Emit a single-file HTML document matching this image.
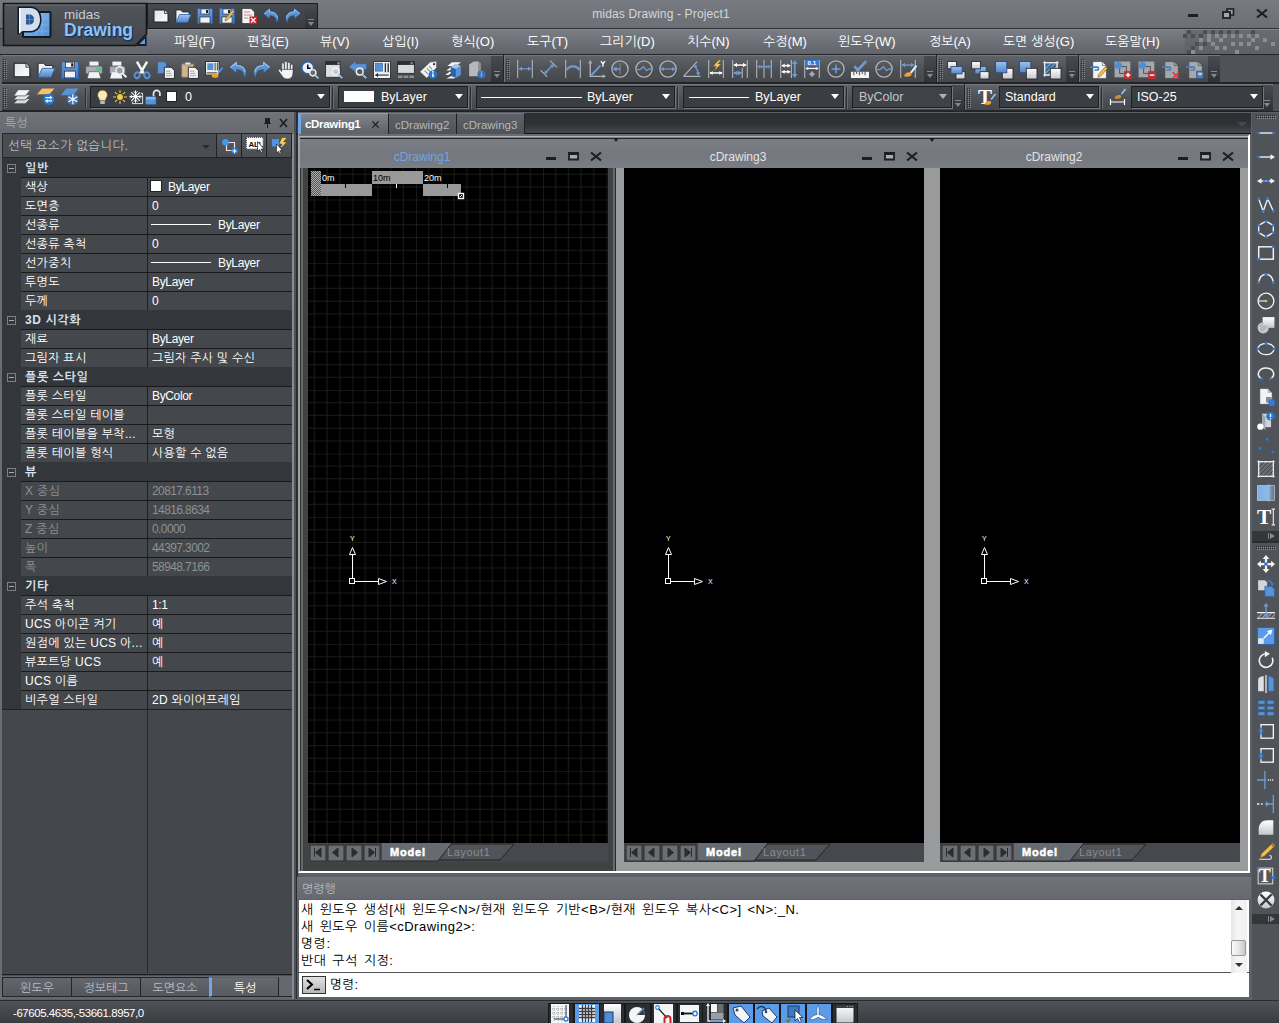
<!DOCTYPE html>
<html lang="ko">
<head>
<meta charset="utf-8">
<title>midas Drawing - Project1</title>
<style>
*{box-sizing:border-box;margin:0;padding:0}
html,body{width:1279px;height:1023px;overflow:hidden}
body{position:relative;background:#5d6066;font-family:"Liberation Sans","NanumGothic","Noto Sans CJK KR",sans-serif;font-size:12px;color:#fff}
.abs{position:absolute}
svg{position:absolute;overflow:visible}
/* title */
#title{left:0;top:0;width:1279px;height:29px;background:linear-gradient(#777a80,#6c6f75);border-bottom:1px solid #2e3034}
#title .cap{left:0;width:1279px;top:7px;text-align:center;color:#d4d6da;font-size:12px;padding-left:43px;letter-spacing:.15px}
#logo{left:3px;top:3px;width:144px;height:43px;border:1px solid #1c1d1f;background:linear-gradient(#4e5258,#3c3f44);box-shadow:0 1px 0 #75787e}
#quick{left:147px;top:3px;width:171px;height:26px;border:1px solid #1c1d1f;background:linear-gradient(#474a4f,#3b3e42)}
#menubar{left:147px;top:29px;width:1132px;height:25px;background:linear-gradient(#7a7d83,#606369);border-top:1px solid #84878d}
#menuleft{left:0;top:46px;width:147px;height:8px;background:#666a70}
.mi{position:absolute;top:34px;font-size:13px;color:#fff;white-space:nowrap;letter-spacing:0}
/* toolbars */
.tbrow{left:0;width:1279px;background:#53565b}
.tb{position:absolute;height:27px;background:linear-gradient(#606369,#4e5156 50%,#44474b);border-top:1px solid #74777d}
.grip{position:absolute;left:1px;top:3px;width:4px;height:20px;background:conic-gradient(transparent 25%,#85888d 0 50%,transparent 0 75%,#2a2c2f 0) 0 0/2px 2px}
.more{position:absolute;right:0;top:0;width:12px;height:26px;background:linear-gradient(#484b50,#303236);border-radius:0 2px 2px 0}
.more:after{content:"";position:absolute;left:3px;top:18px;border:3px solid transparent;border-top:4px solid #85888d;border-bottom:0}
.more:before{content:"";position:absolute;left:3px;top:15px;width:6px;height:1px;background:#85888d}
.combo{position:absolute;height:22px;top:1px;background:#3a3d41;border:1px solid #1d1f21;box-shadow:1px 1px 0 #74777c;color:#fff;font-size:12.5px;line-height:20px;white-space:nowrap}
.combo .arr{position:absolute;right:4px;top:7px;border:4.500px solid transparent;border-top:5.500px solid #fff;border-bottom:0}
.combo .ln{position:absolute;top:10px;height:1px;background:#fff}
/* panel */
#lpanel{left:0;top:112px;width:294px;height:887px;background:#4b4e52;border-right:2px solid #888b91;border-left:2px solid #6a6d72}
#lhead{left:-2px;top:0;width:294px;height:22px;background:linear-gradient(#70737a,#666970);color:#a9acb1;font-size:12px;line-height:23px;padding-left:5px}
#lcombo{left:0px;top:21px;width:290px;height:25px;background:#4a4d51;border:1px solid #26282a}
#grid{left:0px;top:46px;width:290px;height:817px;background:#44474b;border-bottom:1px solid #1c1d1f}
.cat{position:absolute;left:0;width:290px;height:19px;background:#33363a;color:#d6e2f0;font-weight:bold;font-size:12px;line-height:20px;padding-left:23px;letter-spacing:.6px}
.cat:before{content:"";position:absolute;left:5px;top:6px;width:7px;height:7px;border:1px solid #7c7f84}
.cat:after{content:"";position:absolute;left:7px;top:10px;width:5px;height:1px;background:#a8aaad}
.row{position:absolute;left:19px;width:271px;height:19px;background:#44474b;border-top:1px solid #191a1c;font-size:12px;line-height:18px;color:#fff;white-space:nowrap}
.row .k{position:absolute;left:4px;top:0;letter-spacing:.3px}
.row .v{position:absolute;left:126px;top:0;width:145px;height:18px;border-left:1px solid #1e2022;padding-left:4px;letter-spacing:-0.35px}
.row .v.ko{letter-spacing:.25px}
.row.dis{color:#8d9095}
.row.dis .v{letter-spacing:-.6px}
.tabs{position:absolute;top:977px;height:20px;font-size:12px;line-height:20px;text-align:center;color:#b8bbc0;background:linear-gradient(#63666c,#54575c);border:1px solid #232527}
.sw{position:absolute;left:2px;top:2px;width:12px;height:12px;background:#fff;border:1px solid #222}
.pl{position:absolute;left:3px;top:8px;width:60px;height:1px;background:#fff}
/* doc tabs */
#doctabs{left:297px;top:113px;width:954px;height:21px;background:linear-gradient(#2c2e32,#303236 55%,#45484c);border-bottom:1px solid #111}
.dt{position:absolute;top:0;height:21px;font-size:11.500px;line-height:22px;color:#b5b8bd;background:linear-gradient(#5f6268,#4f5257);border-right:1px solid #1f2022;border-top:1px solid #74777d;padding-left:6px;white-space:nowrap}
/* mdi */
#mdi{left:298px;top:134px;width:952px;height:739px;background:#222426;border-left:2px solid #a2a3a5;border-top:2px solid #6a6d72;border-right:2px solid #fff;border-bottom:2px solid #fff}
.win{position:absolute;top:3px;height:732px}
.wt{position:absolute;left:0;top:0;right:0;height:29px;background:linear-gradient(#7b7e84,#74777d 60%,#7a7d83);font-size:12px;color:#e4e6e9;text-align:center;line-height:36px}
.cv{position:absolute;left:8px;top:29px;width:300px;height:675px;background:#000}
.mtabs{position:absolute;left:8px;top:704px;width:300px;height:19px;background:#45484c}
/* cmd */
#cmd{left:297px;top:877px;width:954px;height:122px;background:#5d6066}
#cmdhead{left:0;top:0;width:954px;height:22px;background:linear-gradient(#70737a,#65686e);color:#b4b7bc;font-size:12px;line-height:24px;padding-left:5px}
#cmdtext{left:2px;top:23px;width:950px;height:73px;background:#fff;color:#000;font-size:13px;line-height:17px;padding-left:2px;border-bottom:1px solid #555;white-space:pre;word-spacing:1.800px;letter-spacing:.5px;padding-top:1px}
#cmdin{left:2px;top:96px;width:950px;height:24px;background:#fff;color:#000;font-size:13px;line-height:24px}
/* right toolbar */
#rtb{left:1252px;top:113px;width:27px;height:887px;background:#505357}
.hgrip{position:absolute;left:4px;width:20px;height:4px;background:conic-gradient(transparent 25%,#8d9095 0 50%,transparent 0 75%,#2a2c2f 0) 0 0/2px 2px}
.hmore{position:absolute;left:0;width:27px;height:10px;background:#34363a}
.hmore:after{content:"";position:absolute;left:18px;top:2px;border:3px solid transparent;border-left:5px solid #85888d;border-right:0}
.hmore:before{content:"";position:absolute;left:16px;top:2px;width:1px;height:6px;background:#85888d}
/* status */
#status{left:0;top:1000px;width:1279px;height:23px;background:linear-gradient(#4f5257,#3a3c40);border-top:1px solid #2a2c2e;color:#fff;font-size:12px;line-height:24px}
.sb{position:absolute;top:2px;width:22px;height:21px;background:#3b3e42;border:1px solid #1d1e20}
.sb.on{background:#5b9be0}
</style>
</head>
<body>
<!--TITLE-->
<div id="title" class="abs"><div class="cap abs">midas Drawing - Project1</div></div>
<div id="menuleft" class="abs"></div>
<div id="menubar" class="abs"></div>
<svg id="logosvg" style="left:0;top:0" width="150" height="50" viewBox="0 0 150 50">
<defs><linearGradient id="lg1" x1="0" y1="0" x2="0" y2="1"><stop offset="0" stop-color="#52565b"/><stop offset="1" stop-color="#43464b"/></linearGradient>
<linearGradient id="lg2" x1="0" y1="0" x2="1" y2="1"><stop offset="0" stop-color="#8ec0f0"/><stop offset="1" stop-color="#4f8ed6"/></linearGradient></defs>
<path d="M3.500 3.500H146.500V34L135.500 45.500H3.500z" fill="url(#lg1)" stroke="#141517" stroke-width="1.600"/>
<path d="M5 5h140" stroke="#6c6f74" stroke-width="1"/>
<path d="M146.500 35.500v10.500h-10.500z" fill="#101c2c"/><path d="M145 38.500v5.500h-5.500z" fill="#5aa2ea"/>
<rect x="22" y="11" width="29.500" height="27" rx="2" fill="#0f1a28"/>
<rect x="24" y="13" width="25.500" height="23" fill="url(#lg2)"/>
<path d="M30 13v23M36 13v23M42 13v23M24 19h25M24 25h25M24 31h25" stroke="#a9d0f5" stroke-width=".5" opacity=".6"/>
<path d="M17.500 6.500h13c7 0 11 5.500 11 13s-4 13-11 13h-8.500l-4.500 2.500z" fill="#0f1a28"/>
<path d="M19 8h11.500c6 0 9.500 5 9.500 11.500s-3.500 11.500-9.500 11.500h-8l-3.500 2z" fill="#d2deed"/>
<path d="M19 8v25.500l1.500-1V8z" fill="#fff"/>
<path d="M26 14.500h3.500c3 0 4.500 2 4.500 5s-1.500 5-4.500 5H26z" fill="#2c5a94"/>
<path d="M29.500 14.500v10M26 19.500h8" stroke="#6fa0d8" stroke-width=".6"/>
<text x="64" y="19" font-family="'Liberation Sans',sans-serif" font-size="13.500" fill="#c9ccd1">midas</text>
<text x="64.500" y="37" font-family="'Liberation Sans',sans-serif" font-size="17.500" font-weight="bold" fill="#17355e" stroke="#17355e" stroke-width="1.200" letter-spacing="0">Drawing</text>
<text x="64" y="36" font-family="'Liberation Sans',sans-serif" font-size="17.500" font-weight="bold" fill="#92c2f4" letter-spacing="0">Drawing</text>
</svg>
<div id="quick" class="abs"><div class="more" style="height:24px"></div></div>
<svg style="left:0;top:0" width="1279" height="55" viewBox="0 0 1279 55"><rect x="1185" y="30" width="94" height="24" fill="#5c5f64" opacity=".55"/><rect x="1187" y="30" width="4" height="4" fill="#4b4e53"/><rect x="1203" y="30" width="4" height="4" fill="#4b4e53"/><rect x="1211" y="30" width="4" height="4" fill="#4b4e53"/><rect x="1219" y="30" width="4" height="4" fill="#4b4e53"/><rect x="1227" y="30" width="4" height="4" fill="#4b4e53"/><rect x="1235" y="30" width="4" height="4" fill="#4b4e53"/><rect x="1251" y="30" width="4" height="4" fill="#4b4e53"/><rect x="1183" y="34" width="4" height="4" fill="#4b4e53"/><rect x="1191" y="34" width="4" height="4" fill="#4b4e53"/><rect x="1199" y="34" width="4" height="4" fill="#4b4e53"/><rect x="1195" y="42" width="4" height="4" fill="#4b4e53"/><rect x="1203" y="42" width="4" height="4" fill="#4b4e53"/><rect x="1191" y="46" width="4" height="4" fill="#4b4e53"/><rect x="1187" y="50" width="4" height="4" fill="#4b4e53"/><rect x="1199" y="46" width="4" height="4" fill="#4b4e53"/><rect x="1207" y="34" width="4" height="4" fill="#8a8d93"/><rect x="1215" y="34" width="4" height="4" fill="#8a8d93"/><rect x="1223" y="34" width="4" height="4" fill="#8a8d93"/><rect x="1231" y="34" width="4" height="4" fill="#8a8d93"/><rect x="1239" y="34" width="4" height="4" fill="#8a8d93"/><rect x="1247" y="34" width="4" height="4" fill="#8a8d93"/><rect x="1255" y="34" width="4" height="4" fill="#8a8d93"/><rect x="1199" y="38" width="4" height="4" fill="#8a8d93"/><rect x="1207" y="38" width="4" height="4" fill="#8a8d93"/><rect x="1219" y="38" width="4" height="4" fill="#8a8d93"/><rect x="1251" y="38" width="4" height="4" fill="#8a8d93"/><rect x="1263" y="38" width="4" height="4" fill="#8a8d93"/><rect x="1211" y="42" width="4" height="4" fill="#8a8d93"/><rect x="1231" y="42" width="4" height="4" fill="#8a8d93"/><rect x="1239" y="42" width="4" height="4" fill="#8a8d93"/><rect x="1247" y="42" width="4" height="4" fill="#8a8d93"/><rect x="1271" y="42" width="4" height="4" fill="#8a8d93"/><rect x="1199" y="46" width="4" height="4" fill="#8a8d93"/><rect x="1215" y="46" width="4" height="4" fill="#8a8d93"/><rect x="1223" y="46" width="4" height="4" fill="#8a8d93"/><rect x="1255" y="46" width="4" height="4" fill="#8a8d93"/><rect x="1235" y="50" width="4" height="4" fill="#8a8d93"/><rect x="1191" y="50" width="4" height="4" fill="#8a8d93"/>
<rect x="1188" y="14" width="10" height="3" fill="#1d1f22"/>
<rect x="1227" y="9" width="6.500" height="6" fill="#9a9da2" stroke="#1d1f22" stroke-width="1.600"/><rect x="1223" y="12" width="7" height="6" fill="#a4a7ac" stroke="#1d1f22" stroke-width="1.800"/>
<path d="M1257 9.500l10 8M1267 9.500l-10 8" stroke="#1d1f22" stroke-width="2.200"/></svg>
<!--MENU-->
<span class="mi" style="left:174px">파일(F)</span>
<span class="mi" style="left:247px">편집(E)</span>
<span class="mi" style="left:320px">뷰(V)</span>
<span class="mi" style="left:382px">삽입(I)</span>
<span class="mi" style="left:451px">형식(O)</span>
<span class="mi" style="left:527px">도구(T)</span>
<span class="mi" style="left:600px">그리기(D)</span>
<span class="mi" style="left:687px">치수(N)</span>
<span class="mi" style="left:763px">수정(M)</span>
<span class="mi" style="left:838px">윈도우(W)</span>
<span class="mi" style="left:929px">정보(A)</span>
<span class="mi" style="left:1003px">도면 생성(G)</span>
<span class="mi" style="left:1105px">도움말(H)</span>
<!--TOOLBARS-->
<div class="abs tbrow" style="top:54px;height:58px;background:#222426"></div><div class="abs" style="left:1220px;top:55px;width:59px;height:27px;background:#4f5256"></div><div class="abs" style="left:1273px;top:84px;width:6px;height:27px;background:#4f5256"></div><div class="abs" style="left:0;top:55px;width:2px;height:56px;background:#62656a"></div>
<div id="tb1" class="tb" style="left:2px;top:55px;width:501px"><div class="grip"></div><div class="more"></div></div>
<div id="tb2" class="tb" style="left:504px;top:55px;width:432px;border-left:1px solid #74777d"><div class="grip"></div><div class="more"></div></div>
<div id="tb3" class="tb" style="left:937px;top:55px;width:141px;border-left:1px solid #74777d"><div class="grip"></div><div class="more"></div></div>
<div id="tb4" class="tb" style="left:1079px;top:55px;width:141px;border-left:1px solid #74777d"><div class="grip"></div><div class="more"></div></div>
<div id="tb5" class="tb" style="left:2px;top:84px;width:962px;height:26px"><div class="grip"></div><div class="more"></div>
<div class="abs" style="left:83px;top:3px;width:2px;height:20px;background:#2a2c2f;border-right:1px solid #6a6d72"></div>
<div class="combo" style="left:88px;width:240px"><i class="abs" style="left:75px;top:4px;width:11px;height:11px;background:#fff;border:1px solid #222"></i><span class="abs" style="left:94px;top:0">0</span><i class="arr"></i></div>
<div class="abs" style="left:330px;top:2px;width:2px;height:22px;background:#2a2c2f;border-right:1px solid #6a6d72"></div>
<div class="combo" style="left:336px;width:130px"><i class="abs" style="left:5px;top:4px;width:30px;height:11px;background:#fff"></i><span class="abs" style="left:42px;top:0">ByLayer</span><i class="arr"></i></div>
<div class="abs" style="left:468px;top:2px;width:2px;height:22px;background:#2a2c2f;border-right:1px solid #6a6d72"></div>
<div class="combo" style="left:474px;width:199px"><i class="ln" style="left:4px;width:101px"></i><span class="abs" style="left:110px;top:0">ByLayer</span><i class="arr"></i></div>
<div class="abs" style="left:675px;top:2px;width:2px;height:22px;background:#2a2c2f;border-right:1px solid #6a6d72"></div>
<div class="combo" style="left:681px;width:161px"><i class="ln" style="left:5px;width:60px"></i><span class="abs" style="left:71px;top:0">ByLayer</span><i class="arr"></i></div>
<div class="abs" style="left:844px;top:2px;width:2px;height:22px;background:#2a2c2f;border-right:1px solid #6a6d72"></div>
<div class="combo" style="left:850px;width:100px;color:#c4c6ca;background:#3f4246"><span class="abs" style="left:6px;top:0">ByColor</span><i class="arr" style="border-top-color:#b0b2b6"></i></div>
</div>
<div id="tb6" class="tb" style="left:965px;top:84px;width:308px;height:26px;border-left:1px solid #74777d"><div class="grip"></div><div class="more"></div>
<div class="combo" style="left:33px;width:100px"><span class="abs" style="left:5px;top:0">Standard</span><i class="arr"></i></div>
<div class="abs" style="left:135px;top:2px;width:2px;height:22px;background:#2a2c2f;border-right:1px solid #6a6d72"></div>
<div class="combo" style="left:165px;width:132px"><span class="abs" style="left:5px;top:0">ISO-25</span><i class="arr"></i></div>
</div>
<svg width="0" height="0" style="left:0;top:0"><defs><linearGradient id="gw" x1="0" y1="0" x2="0" y2="1"><stop offset="0" stop-color="#ffffff"/><stop offset="1" stop-color="#c4c7cc"/></linearGradient><linearGradient id="gb" x1="0" y1="0" x2="0" y2="1"><stop offset="0" stop-color="#9cc4f0"/><stop offset="1" stop-color="#4f86c8"/></linearGradient><linearGradient id="gw2" x1="0" y1="0" x2="1" y2="1"><stop offset="0" stop-color="#dfe1e5"/><stop offset="1" stop-color="#ffffff"/></linearGradient><linearGradient id="gb2" x1="0" y1="0" x2="0" y2="1"><stop offset="0" stop-color="#6e9fd8"/><stop offset="1" stop-color="#4676ba"/></linearGradient></defs></svg>
<!--LEFT PANEL-->
<div id="lpanel" class="abs">
<div id="lhead" class="abs">특성<svg style="left:262px;top:5px" width="26" height="12" viewBox="0 0 26 12"><path d="M3 1h5v5h1v1H6v4H5V7H2V6h1z" fill="#1e2022"/><path d="M18 2l7 8M25 2l-7 8" stroke="#1e2022" stroke-width="1.8" fill="none"/></svg></div>
<div id="lcombo" class="abs"><span class="abs" style="left:5px;top:4px;color:#b9bcc0;font-size:12.500px;letter-spacing:.35px;white-space:nowrap">선택 요소가 없습니다.</span><i class="abs" style="left:199px;top:11px;border:4px solid transparent;border-top:4px solid #2a2c2f;border-bottom:0"></i>
<div class="abs" style="left:213px;top:-1px;width:26px;height:25px;border:1px solid #1f2123;background:linear-gradient(#585b60,#4a4d51)"><svg style="left:4px;top:4px" width="18" height="18" viewBox="0 0 18 18"><path d="M5.500 4.500h8v8h-8z" fill="none" stroke="#f0e0e4" stroke-width="1.200"/><circle cx="4.500" cy="4.200" r="3.300" fill="#3f9af0"/><circle cx="13.500" cy="13" r="3.300" fill="#2f7be0"/><path d="M11.500 13h4M13.500 11v4" stroke="#fff" stroke-width="1.100"/></svg></div>
<div class="abs" style="left:238px;top:-1px;width:26px;height:25px;border:1px solid #1f2123;background:linear-gradient(#585b60,#4a4d51)"><svg style="left:4px;top:3px" width="18" height="18" viewBox="0 0 18 18"><rect x="1" y="1" width="15.500" height="10.500" fill="#fff" stroke="#fff" stroke-dasharray="1 1" stroke-width="1.500"/><text x="2.500" y="9.500" font-family="'Liberation Sans',sans-serif" font-size="8" font-weight="bold" fill="#111" letter-spacing="-.3">ALL</text><path d="M11.500 4.500v10l2.200-2 1.500 3.500 1.500-.7-1.500-3.300h3z" fill="#fff" stroke="#111" stroke-width=".7"/></svg></div>
<div class="abs" style="left:263px;top:-1px;width:26px;height:25px;border:1px solid #1f2123;background:linear-gradient(#585b60,#4a4d51)"><svg style="left:4px;top:3px" width="18" height="18" viewBox="0 0 18 18"><rect x="1" y="2" width="7" height="7.500" fill="#4f93e6"/><path d="M16 .5h-5L8 7h3l-2.500 5.500L16 5h-3.500z" fill="#f6cf5a" stroke="#3a2c08" stroke-width=".4"/><path d="M5.500 7v9l2-1.800 1.300 3 1.400-.6-1.300-3h2.600z" fill="#fff" stroke="#111" stroke-width=".6"/></svg></div>
</div>
<div id="grid" class="abs">
<div class="abs" style="left:0;top:0;width:19px;height:551px;background:#33363a"></div>
<div class="cat" style="top:0px">일반</div>
<div class="row" style="top:19px"><span class="k">색상</span><span class="v"><i class="sw"></i><span style="margin-left:16px">ByLayer</span></span></div>
<div class="row" style="top:38px"><span class="k">도면층</span><span class="v">0</span></div>
<div class="row" style="top:57px"><span class="k">선종류</span><span class="v"><i class="pl"></i><span style="margin-left:66px">ByLayer</span></span></div>
<div class="row" style="top:76px"><span class="k">선종류 축척</span><span class="v">0</span></div>
<div class="row" style="top:95px"><span class="k">선가중치</span><span class="v"><i class="pl"></i><span style="margin-left:66px">ByLayer</span></span></div>
<div class="row" style="top:114px"><span class="k">투명도</span><span class="v">ByLayer</span></div>
<div class="row" style="top:133px"><span class="k">두께</span><span class="v">0</span></div>
<div class="cat" style="top:152px">3D 시각화</div>
<div class="row" style="top:171px"><span class="k">재료</span><span class="v">ByLayer</span></div>
<div class="row" style="top:190px"><span class="k">그림자 표시</span><span class="v ko">그림자 주사 및 수신</span></div>
<div class="cat" style="top:209px">플롯 스타일</div>
<div class="row" style="top:228px"><span class="k">플롯 스타일</span><span class="v">ByColor</span></div>
<div class="row" style="top:247px"><span class="k">플롯 스타일 테이블</span><span class="v"></span></div>
<div class="row" style="top:266px"><span class="k">플롯 테이블을 부착...</span><span class="v ko">모형</span></div>
<div class="row" style="top:285px"><span class="k">플롯 테이블 형식</span><span class="v ko">사용할 수 없음</span></div>
<div class="cat" style="top:304px">뷰</div>
<div class="row dis" style="top:323px"><span class="k">X 중심</span><span class="v">20817.6113</span></div>
<div class="row dis" style="top:342px"><span class="k">Y 중심</span><span class="v">14816.8634</span></div>
<div class="row dis" style="top:361px"><span class="k">Z 중심</span><span class="v">0.0000</span></div>
<div class="row dis" style="top:380px"><span class="k">높이</span><span class="v">44397.3002</span></div>
<div class="row dis" style="top:399px"><span class="k">폭</span><span class="v">58948.7166</span></div>
<div class="cat" style="top:418px">기타</div>
<div class="row" style="top:437px"><span class="k">주석 축척</span><span class="v">1:1</span></div>
<div class="row" style="top:456px"><span class="k">UCS 아이콘 켜기</span><span class="v">예</span></div>
<div class="row" style="top:475px"><span class="k">원점에 있는 UCS 아...</span><span class="v">예</span></div>
<div class="row" style="top:494px"><span class="k">뷰포트당 UCS</span><span class="v">예</span></div>
<div class="row" style="top:513px"><span class="k">UCS 이름</span><span class="v"></span></div>
<div class="row" style="top:532px"><span class="k">비주얼 스타일</span><span class="v ko">2D 와이어프레임</span></div>
<div class="abs" style="left:145px;top:551px;width:1px;height:264px;background:#26282a"></div>
<div class="abs" style="left:0;top:551px;width:290px;height:1px;background:#1e2022"></div>
</div>
</div>
<div class="abs" style="left:2px;top:976px;width:290px;height:23px;background:#65686e"></div><div class="abs" style="left:2px;top:996px;width:290px;height:1px;background:#232527"></div>
<div class="tabs" style="left:2px;width:70px">윈도우</div>
<div class="tabs" style="left:71px;width:70px">정보태그</div>
<div class="tabs" style="left:140px;width:70px">도면요소</div>
<div class="tabs" style="left:209px;width:70px;color:#fff;background:linear-gradient(#666970,#585b61);border-left:3px solid #6fa8e8;border-top-color:#5d6066">특성</div>
<div class="abs" style="left:294px;top:112px;width:4px;height:887px;background:linear-gradient(90deg,#4d5054 55%,#2c2e31 55%)"></div>
<!--DOC TABS-->
<div id="doctabs" class="abs">
<div class="dt" style="left:1px;width:91px;height:23px;color:#fff;font-weight:bold;font-size:11.500px;letter-spacing:-.3px;background:linear-gradient(#80848b,#5a5d63);border-left:3px solid #6fa8e8;padding-left:4px;border-top:1px solid #9a9da3;line-height:21px">cDrawing1<svg style="left:71px;top:7px" width="7" height="7" viewBox="0 0 9 9"><path d="M0.5 0.5l8 8M8.5 0.5l-8 8" stroke="#15161a" stroke-width="1.4" fill="none"/></svg></div>
<div class="dt" style="left:92px;width:68px">cDrawing2</div>
<div class="dt" style="left:160px;width:68px">cDrawing3</div>
<i class="abs" style="left:940px;top:9px;border:5px solid transparent;border-top:5px solid #45484c;border-bottom:0"></i>
</div>
<!--MDI-->
<div id="mdi" class="abs"><div class="abs" style="left:0;top:0;width:948px;height:1px;background:#b2b5ba"></div><div class="abs" style="left:0;top:1px;width:948px;height:1px;background:#7c7f85"></div><i class="abs" style="left:313px;top:2px;border:3px solid transparent;border-top:4px solid #1d1f22;border-bottom:0;z-index:3"></i><i class="abs" style="left:629px;top:2px;border:3px solid transparent;border-top:4px solid #1d1f22;border-bottom:0;z-index:3"></i><div class="win" style="left:0px;width:316px;background:#414244"><div class="wt" style="color:#6ea6e6"><span class="abs" style="left:0;width:244px;text-align:center;top:0">cDrawing1</span><svg style="left:246px;top:13px" width="62" height="11" viewBox="0 0 62 11"><path d="M0 5h10v3H0z" fill="#1d1f22"/><path d="M23 1h9v6.500h-9z" fill="#a9acb1" stroke="#1d1f22" stroke-width="1.800"/><path d="M22 0h11v3H22z" fill="#1d1f22"/><path d="M45 .5l10 8M55 .5l-10 8" stroke="#1d1f22" stroke-width="2.200" fill="none"/></svg></div><div class="abs" style="left:0;top:29px;width:3px;height:703px;background:linear-gradient(90deg,#333 30%,#666 30%)"></div><div class="abs" style="left:313px;top:29px;width:2px;height:703px;background:#68696b"></div><div class="abs" style="left:315px;top:29px;width:1px;height:703px;background:#28292b"></div><div class="cv" id="cv1"><svg width="300" height="675" viewBox="0 0 300 675" style="left:0;top:0;overflow:hidden"><defs><pattern id="gp" width="63.5" height="63.5" patternUnits="userSpaceOnUse" patternTransform="translate(44.5 412.5)"><path d="M12.7 0v64M25.4 0v64M38.1 0v64M50.8 0v64M0 12.7h64M0 25.4h64M0 38.1h64M0 50.8h64" stroke="#1c1c1b" stroke-width="1" fill="none"/><path d="M0 0v64M0 0h64" stroke="#2a2a28" stroke-width="1.1" fill="none"/></pattern><pattern id="ck" width="2" height="2" patternUnits="userSpaceOnUse"><rect width="2" height="2" fill="#555"/><rect width="1" height="1" fill="#aaa"/><rect x="1" y="1" width="1" height="1" fill="#aaa"/></pattern></defs><rect width="300" height="675" fill="url(#gp)"/>
<rect x="3" y="3" width="10" height="25" fill="url(#ck)"/><rect x="13" y="16" width="51" height="12" fill="#999"/><rect x="64" y="3" width="51" height="13" fill="#999"/><rect x="115" y="16" width="38" height="12" fill="#999"/>
<path d="M37.500 16v4M139.500 16v4" stroke="#000"/><path d="M88.500 16v4" stroke="#fff"/>
<rect x="150.500" y="25.500" width="5" height="5" fill="#000" stroke="#fff" stroke-width="1.4"/><path d="M152 29l2-2" stroke="#fff"/>
<text x="14" y="13" font-family="'Liberation Sans',sans-serif" font-size="9" fill="#fff">0m</text><text x="65" y="13" font-family="'Liberation Sans',sans-serif" font-size="9" fill="#000">10m</text><text x="116" y="13" font-family="'Liberation Sans',sans-serif" font-size="9" fill="#fff">20m</text><g fill="none" stroke="#fff" stroke-width="1" shape-rendering="crispEdges"><path d="M41.500 410.500h5v5h-5zM44.500 410V387M47 413.500h23"/><path d="M44.500 379.500l-3 7h6zM78.500 413.500l-8-3v6z" shape-rendering="auto"/></g><text x="84" y="416" font-family="'Liberation Sans',sans-serif" font-size="7" fill="#fff">X</text><text x="42" y="373" font-family="'Liberation Sans',sans-serif" font-size="7" fill="#fff">Y</text></svg></div><div class="mtabs"><svg style="left:2px;top:2px" width="16" height="16" viewBox="0 0 16 16"><rect width="16" height="16" fill="#6b6e73" stroke="#2c2e31"/><path d="M4.5 3v9M11 3v9L5.5 7.5z" fill="#2a2c2f" stroke="#2a2c2f" stroke-width="1"/></svg><svg style="left:20px;top:2px" width="16" height="16" viewBox="0 0 16 16"><rect width="16" height="16" fill="#6b6e73" stroke="#2c2e31"/><path d="M10 3v9L4.5 7.5z" fill="#2a2c2f" stroke="#2a2c2f" stroke-width="1"/></svg><svg style="left:38px;top:2px" width="16" height="16" viewBox="0 0 16 16"><rect width="16" height="16" fill="#6b6e73" stroke="#2c2e31"/><path d="M6 3v9l5.5-4.5z" fill="#2a2c2f" stroke="#2a2c2f" stroke-width="1"/></svg><svg style="left:56px;top:2px" width="16" height="16" viewBox="0 0 16 16"><rect width="16" height="16" fill="#6b6e73" stroke="#2c2e31"/><path d="M11.500 3v9M5 3v9l5.5-4.5z" fill="#2a2c2f" stroke="#2a2c2f" stroke-width="1"/></svg><svg style="left:74px;top:0" width="140" height="19" viewBox="0 0 140 19"><path d="M56 1h76l-14 16H54z" fill="#505358" stroke="#222427"/><path d="M0 0h70L56 18H0z" fill="#666a71"/><path d="M70 0L56 18H0" fill="none" stroke="#222427"/><text x="8" y="13" font-family="'Liberation Sans',sans-serif" font-size="11" font-weight="bold" fill="#fff" letter-spacing="0.8" stroke="#fff" stroke-width="0.5">Model</text><text x="65" y="13" font-family="'Liberation Sans',sans-serif" font-size="11" fill="#8a8d92" letter-spacing="0.6">Layout1</text></svg></div></div><div class="win" style="left:316px;width:316px;background:#9a9b9c"><div class="wt" style="color:#e2e4e7"><span class="abs" style="left:0;width:244px;text-align:center;top:0">cDrawing3</span><svg style="left:246px;top:13px" width="62" height="11" viewBox="0 0 62 11"><path d="M0 5h10v3H0z" fill="#1d1f22"/><path d="M23 1h9v6.500h-9z" fill="#a9acb1" stroke="#1d1f22" stroke-width="1.800"/><path d="M22 0h11v3H22z" fill="#1d1f22"/><path d="M45 .5l10 8M55 .5l-10 8" stroke="#1d1f22" stroke-width="2.200" fill="none"/></svg></div><div class="cv" id="cv2"><svg width="300" height="675" viewBox="0 0 300 675" style="left:0;top:0;overflow:hidden"><g fill="none" stroke="#fff" stroke-width="1" shape-rendering="crispEdges"><path d="M41.500 410.500h5v5h-5zM44.500 410V387M47 413.500h23"/><path d="M44.500 379.500l-3 7h6zM78.500 413.500l-8-3v6z" shape-rendering="auto"/></g><text x="84" y="416" font-family="'Liberation Sans',sans-serif" font-size="7" fill="#fff">X</text><text x="42" y="373" font-family="'Liberation Sans',sans-serif" font-size="7" fill="#fff">Y</text></svg></div><div class="mtabs"><svg style="left:2px;top:2px" width="16" height="16" viewBox="0 0 16 16"><rect width="16" height="16" fill="#6b6e73" stroke="#2c2e31"/><path d="M4.5 3v9M11 3v9L5.5 7.5z" fill="#2a2c2f" stroke="#2a2c2f" stroke-width="1"/></svg><svg style="left:20px;top:2px" width="16" height="16" viewBox="0 0 16 16"><rect width="16" height="16" fill="#6b6e73" stroke="#2c2e31"/><path d="M10 3v9L4.5 7.5z" fill="#2a2c2f" stroke="#2a2c2f" stroke-width="1"/></svg><svg style="left:38px;top:2px" width="16" height="16" viewBox="0 0 16 16"><rect width="16" height="16" fill="#6b6e73" stroke="#2c2e31"/><path d="M6 3v9l5.5-4.5z" fill="#2a2c2f" stroke="#2a2c2f" stroke-width="1"/></svg><svg style="left:56px;top:2px" width="16" height="16" viewBox="0 0 16 16"><rect width="16" height="16" fill="#6b6e73" stroke="#2c2e31"/><path d="M11.500 3v9M5 3v9l5.5-4.5z" fill="#2a2c2f" stroke="#2a2c2f" stroke-width="1"/></svg><svg style="left:74px;top:0" width="140" height="19" viewBox="0 0 140 19"><path d="M56 1h76l-14 16H54z" fill="#505358" stroke="#222427"/><path d="M0 0h70L56 18H0z" fill="#666a71"/><path d="M70 0L56 18H0" fill="none" stroke="#222427"/><text x="8" y="13" font-family="'Liberation Sans',sans-serif" font-size="11" font-weight="bold" fill="#fff" letter-spacing="0.8" stroke="#fff" stroke-width="0.5">Model</text><text x="65" y="13" font-family="'Liberation Sans',sans-serif" font-size="11" fill="#8a8d92" letter-spacing="0.6">Layout1</text></svg></div></div><div class="win" style="left:632px;width:316px;background:#9a9b9c"><div class="wt" style="color:#e2e4e7"><span class="abs" style="left:0;width:244px;text-align:center;top:0">cDrawing2</span><svg style="left:246px;top:13px" width="62" height="11" viewBox="0 0 62 11"><path d="M0 5h10v3H0z" fill="#1d1f22"/><path d="M23 1h9v6.500h-9z" fill="#a9acb1" stroke="#1d1f22" stroke-width="1.800"/><path d="M22 0h11v3H22z" fill="#1d1f22"/><path d="M45 .5l10 8M55 .5l-10 8" stroke="#1d1f22" stroke-width="2.200" fill="none"/></svg></div><div class="cv" id="cv3"><svg width="300" height="675" viewBox="0 0 300 675" style="left:0;top:0;overflow:hidden"><g fill="none" stroke="#fff" stroke-width="1" shape-rendering="crispEdges"><path d="M41.500 410.500h5v5h-5zM44.500 410V387M47 413.500h23"/><path d="M44.500 379.500l-3 7h6zM78.500 413.500l-8-3v6z" shape-rendering="auto"/></g><text x="84" y="416" font-family="'Liberation Sans',sans-serif" font-size="7" fill="#fff">X</text><text x="42" y="373" font-family="'Liberation Sans',sans-serif" font-size="7" fill="#fff">Y</text></svg></div><div class="mtabs"><svg style="left:2px;top:2px" width="16" height="16" viewBox="0 0 16 16"><rect width="16" height="16" fill="#6b6e73" stroke="#2c2e31"/><path d="M4.5 3v9M11 3v9L5.5 7.5z" fill="#2a2c2f" stroke="#2a2c2f" stroke-width="1"/></svg><svg style="left:20px;top:2px" width="16" height="16" viewBox="0 0 16 16"><rect width="16" height="16" fill="#6b6e73" stroke="#2c2e31"/><path d="M10 3v9L4.5 7.5z" fill="#2a2c2f" stroke="#2a2c2f" stroke-width="1"/></svg><svg style="left:38px;top:2px" width="16" height="16" viewBox="0 0 16 16"><rect width="16" height="16" fill="#6b6e73" stroke="#2c2e31"/><path d="M6 3v9l5.5-4.5z" fill="#2a2c2f" stroke="#2a2c2f" stroke-width="1"/></svg><svg style="left:56px;top:2px" width="16" height="16" viewBox="0 0 16 16"><rect width="16" height="16" fill="#6b6e73" stroke="#2c2e31"/><path d="M11.500 3v9M5 3v9l5.5-4.5z" fill="#2a2c2f" stroke="#2a2c2f" stroke-width="1"/></svg><svg style="left:74px;top:0" width="140" height="19" viewBox="0 0 140 19"><path d="M56 1h76l-14 16H54z" fill="#505358" stroke="#222427"/><path d="M0 0h70L56 18H0z" fill="#666a71"/><path d="M70 0L56 18H0" fill="none" stroke="#222427"/><text x="8" y="13" font-family="'Liberation Sans',sans-serif" font-size="11" font-weight="bold" fill="#fff" letter-spacing="0.8" stroke="#fff" stroke-width="0.5">Model</text><text x="65" y="13" font-family="'Liberation Sans',sans-serif" font-size="11" fill="#8a8d92" letter-spacing="0.6">Layout1</text></svg></div></div></div>
<!--CMD-->
<div id="cmd" class="abs">
<div id="cmdhead" class="abs">명령행</div>
<div id="cmdtext" class="abs">새 윈도우 생성[새 윈도우&lt;N&gt;/현재 윈도우 기반&lt;B&gt;/현재 윈도우 복사&lt;C&gt;] &lt;N&gt;:_N.
새 윈도우 이름&lt;cDrawing2&gt;:
명령:
반대 구석 지정:</div>
<div class="abs" style="left:934px;top:23px;width:16px;height:73px;background:linear-gradient(90deg,#e6e6e6,#f6f6f6 40%,#f0f0f0)"><i class="abs" style="left:4px;top:6px;border:4px solid transparent;border-bottom:4px solid #333;border-top:0"></i><div class="abs" style="left:0;top:40px;width:15px;height:16px;border:1px solid #9a9a9a;border-radius:2px;background:linear-gradient(90deg,#fafafa,#e8e8e8 50%,#c8c8c8)"></div><i class="abs" style="left:4px;top:63px;border:4px solid transparent;border-top:4px solid #333;border-bottom:0"></i></div>
<div id="cmdin" class="abs"><div class="abs" style="left:3px;top:3px;width:24px;height:18px;background:linear-gradient(#e0e0e0,#b8b8b8);border:1px solid #333"><svg style="left:3px;top:2px" width="16" height="12" viewBox="0 0 16 12"><path d="M1 1l5 4.500L1 10" stroke="#000" stroke-width="2" fill="none"/><path d="M8 10.500h6" stroke="#000" stroke-width="1.500"/></svg></div><span class="abs" style="left:31px;top:0">명령:</span></div>
</div>
<!--RIGHT TB-->
<div id="rtb" class="abs"><div class="hgrip" style="top:2px"></div><div class="hmore" style="top:418px"></div><div class="abs" style="left:0;top:428px;width:27px;height:2px;background:#2a2c2f"></div><div class="hgrip" style="top:433px"></div><div class="hmore" style="top:801px"></div></div>
<!--STATUS-->
<div id="status" class="abs"><span class="abs" style="left:13px;top:0;letter-spacing:-0.45px;font-size:11.500px">-67605.4635,-53661.8957,0</span><svg style="left:548px;top:2px" width="26" height="21" viewBox="0 0 26 21"><rect x=".5" y=".5" width="25" height="21" fill="#2b2d30" stroke="#17181a"/><rect x="3" y="1" width="18" height="19" fill="#f4f5f6"/><path d="M6 3v16M10 3v16M14 3v16M4 6h16M4 10h16M4 14h16" stroke="#9a9da3" stroke-width="1" stroke-dasharray="1 1"/><path d="M18 2v14H6" fill="none" stroke="#333" stroke-width="1"/><circle cx="18" cy="16" r="2" fill="#fff" stroke="#2f7be0" stroke-width="1.300"/></svg><svg style="left:573.5px;top:2px" width="26" height="21" viewBox="0 0 26 21"><rect x=".5" y=".5" width="25" height="21" fill="#5b9be8" stroke="#17181a"/><rect x="5" y="2" width="16" height="17" fill="#fff"/><path d="M8.500 2v17M11.500 2v17M14.500 2v17M17.500 2v17M5 5.500h16M5 8.500h16M5 11.500h16M5 14.500h16" stroke="#3a3c40" stroke-width="1.400"/></svg><svg style="left:599px;top:2px" width="26" height="21" viewBox="0 0 26 21"><rect x=".5" y=".5" width="25" height="21" fill="#2b2d30" stroke="#17181a"/><rect x="5" y="1" width="17" height="19" fill="url(#gw)"/><rect x="5" y="9" width="9" height="11" fill="#4f8ed6" stroke="#1c3a64" stroke-width="1"/></svg><svg style="left:625px;top:2px" width="26" height="21" viewBox="0 0 26 21"><rect x=".5" y=".5" width="25" height="21" fill="#2b2d30" stroke="#17181a"/><circle cx="12" cy="12" r="8" fill="#f4f5f6"/><path d="M12 12h8a8 8 0 0 0-2.500-5.700z" fill="#3a3c40"/><path d="M12 12l7-7" stroke="#4f8ed6" stroke-width="1.200"/></svg><svg style="left:650.5px;top:2px" width="26" height="21" viewBox="0 0 26 21"><rect x=".5" y=".5" width="25" height="21" fill="#2b2d30" stroke="#17181a"/><rect x="3" y="1" width="19" height="19" fill="#f4f5f6"/><path d="M6 4l10 11" stroke="#222" stroke-width="1.200"/><circle cx="6.500" cy="4.500" r="1.800" fill="#fff" stroke="#2f7be0" stroke-width="1.200"/><path d="M13.500 20v-4a3 3 0 0 1 6 0v4" fill="none" stroke="#c8222c" stroke-width="2"/></svg><svg style="left:676.5px;top:2px" width="26" height="21" viewBox="0 0 26 21"><rect x=".5" y=".5" width="25" height="21" fill="#2b2d30" stroke="#17181a"/><rect x="3" y="2" width="19" height="17" fill="#f4f5f6"/><path d="M5 10.500h12" stroke="#111" stroke-width="1.800"/><rect x="4" y="9" width="3" height="3" fill="#111"/><circle cx="18" cy="10.500" r="2.200" fill="#fff" stroke="#2f7be0" stroke-width="1.400"/></svg><svg style="left:702px;top:2px" width="26" height="21" viewBox="0 0 26 21"><rect x=".5" y=".5" width="25" height="21" fill="#2b2d30" stroke="#17181a"/><rect x="9" y="1" width="6" height="8" fill="#f4f5f6"/><rect x="15.500" y="1" width="6" height="8" fill="#6a6d72"/><rect x="9" y="9.500" width="12.500" height="7" fill="#9a9da3"/><path d="M6 1v17h17" fill="none" stroke="#f4f5f6" stroke-width="1.300"/><path d="M6 0l-2 3h4zM24 18l-3-2v4z" fill="#f4f5f6"/><path d="M8 18h13" stroke="#2f7be0" stroke-width="1"/></svg><svg style="left:728px;top:2px" width="26" height="21" viewBox="0 0 26 21"><rect x=".5" y=".5" width="25" height="21" fill="#5b9be8" stroke="#17181a"/><path d="M5 5l8-2 9 11-6 6-9-8z" fill="#f4f5f6" stroke="#1c3a64" stroke-width="1"/><circle cx="9" cy="7" r="1.500" fill="#2a4a78"/></svg><svg style="left:754px;top:2px" width="26" height="21" viewBox="0 0 26 21"><rect x=".5" y=".5" width="25" height="21" fill="#5b9be8" stroke="#17181a"/><path d="M8 8l7-3 8 9-5 6-9-7z" fill="#f4f5f6" stroke="#1c3a64" stroke-width="1"/><path d="M3 6c3-4 8-3 9 2" fill="none" stroke="#1c3a64" stroke-width="1.500"/><circle cx="12" cy="9" r="1.300" fill="#2a4a78"/></svg><svg style="left:780px;top:2px" width="26" height="21" viewBox="0 0 26 21"><rect x=".5" y=".5" width="25" height="21" fill="#5b9be8" stroke="#17181a"/><rect x="8" y="3" width="11" height="11" fill="#3f78c0" stroke="#1c3a64" stroke-width="1"/><path d="M15 7v11l2.500-2.500 2 4 2-1-2-4h3.500z" fill="#fff" stroke="#111" stroke-width=".7"/><path d="M6 17l2 2 2-3" stroke="#8a6a18" stroke-width="1.500" fill="none"/></svg><svg style="left:806px;top:2px" width="26" height="21" viewBox="0 0 26 21"><rect x=".5" y=".5" width="25" height="21" fill="#5b9be8" stroke="#17181a"/><path d="M12 2c1.500 3 1.500 6 .8 9.500 3 .5 6 2.500 8 5-3.500 0-6.500-.5-8.800-2.500-2 2-5 3-8.500 2.500 2-3 4.500-4.500 7.500-5C10.500 8 10.500 5 12 2z" fill="#fff" stroke="#2a4a78" stroke-width=".6"/></svg><svg style="left:832px;top:2px" width="26" height="21" viewBox="0 0 26 21"><rect x=".5" y=".5" width="25" height="21" fill="#2b2d30" stroke="#17181a"/><rect x="4" y="2" width="18" height="18" fill="url(#gw)" stroke="#222" stroke-width="1"/><rect x="4" y="2" width="18" height="3" fill="#3a3c40"/><path d="M15 3.500h1M17.500 3.500h1M20 3.500h1" stroke="#aaa" stroke-width="1"/></svg></div>
<!--ICONS--><svg style="left:153px;top:8px" width="16" height="16" viewBox="0 0 16 16"><path d="M1 2h10.500l3.500 3.500v8.500h-14z" fill="url(#gw2)" stroke="#1f2124" stroke-width="1"/><path d="M11.500 2v3.500h3.500" fill="#cfd2d6" stroke="#1f2124" stroke-width=".7"/></svg>
<svg style="left:175px;top:8px" width="16" height="16" viewBox="0 0 16 16"><path d="M1 14V2h5l1.500 2h6.500v10z" fill="#f2f3f5" stroke="#1f2124" stroke-width=".8"/><path d="M1 14.500l3.500-8h11.500l-3.500 8z" fill="url(#gb)" stroke="#2f63a8" stroke-width=".8"/></svg>
<svg style="left:197px;top:8px" width="16" height="16" viewBox="0 0 16 16"><path d="M.5.500h14l1 1v14h-15z" fill="url(#gb2)" stroke="#2f63a8" stroke-width="1"/><rect x="4" y="1" width="8" height="5" fill="#f2f3f5" stroke="#1f2124" stroke-width=".6"/><rect x="9" y="2" width="2" height="3" fill="#1f2124"/><rect x="3" y="9" width="10" height="6" fill="#f2f3f5" stroke="#1f2124" stroke-width=".6"/></svg>
<svg style="left:219px;top:8px" width="16" height="16" viewBox="0 0 16 16"><path d="M.5.500h14l1 1v14h-15z" fill="url(#gb2)" stroke="#2f63a8" stroke-width="1"/><rect x="4" y="1" width="8" height="5" fill="#f2f3f5" stroke="#1f2124" stroke-width=".6"/><rect x="9" y="2" width="2" height="3" fill="#1f2124"/><rect x="3" y="9" width="10" height="6" fill="#f2f3f5" stroke="#1f2124" stroke-width=".6"/><path d="M15.500 3.500l-7 8.500-2.500 1 .5-2.500 7-8.500z" fill="#f2c14a" stroke="#6b5416" stroke-width=".6"/></svg>
<svg style="left:241px;top:8px" width="16" height="16" viewBox="0 0 16 16"><path d="M1 .5h9l3.500 3.500v11.500H1z" fill="#f2f3f5" stroke="#1f2124" stroke-width=".6"/><path d="M3 4h6M3 7h8M3 10h4" stroke="#c77" stroke-width=".9"/><rect x="8.500" y="8.500" width="7.500" height="7.500" fill="#d8202a"/><path d="M10 10l4.500 4.500M14.500 10L10 14.500" stroke="#fff" stroke-width="1.300"/></svg>
<svg style="left:263px;top:8px" width="16" height="16" viewBox="0 0 16 16"><path d="M.5 5.500l6-5v3c6 0 8.500 3 8.500 8.500l-1.500 2.500c0-5-2-7-7-7v3z" fill="#5a92d6" stroke="#2f63a8" stroke-width=".5"/><path d="M1.500 5.500l5-4v2.500c5 0 7.500 2 8 6" fill="none" stroke="#9cc4f0" stroke-width="1"/></svg>
<svg style="left:285px;top:8px" width="16" height="16" viewBox="0 0 16 16"><path d="M15.500 5.500l-6-5v3c-6 0-8.500 3-8.500 8.500l1.500 2.500c0-5 2-7 7-7v3z" fill="#5a92d6" stroke="#2f63a8" stroke-width=".5"/><path d="M14.500 5.500l-5-4v2.500c-5 0-7.500 2-8 6" fill="none" stroke="#9cc4f0" stroke-width="1"/></svg>
<svg style="left:13px;top:60.5px" width="18" height="18" viewBox="0 0 16 16"><path d="M1 2h10.500l3.500 3.500v8.500h-14z" fill="url(#gw2)" stroke="#1f2124" stroke-width="1"/><path d="M11.500 2v3.500h3.500" fill="#cfd2d6" stroke="#1f2124" stroke-width=".7"/></svg>
<svg style="left:36.97px;top:60.5px" width="18" height="18" viewBox="0 0 16 16"><path d="M1 14V2h5l1.500 2h6.500v10z" fill="#f2f3f5" stroke="#1f2124" stroke-width=".8"/><path d="M1 14.500l3.500-8h11.500l-3.500 8z" fill="url(#gb)" stroke="#2f63a8" stroke-width=".8"/></svg>
<svg style="left:60.94px;top:60.5px" width="18" height="18" viewBox="0 0 16 16"><path d="M.5.500h14l1 1v14h-15z" fill="url(#gb2)" stroke="#2f63a8" stroke-width="1"/><rect x="4" y="1" width="8" height="5" fill="#f2f3f5" stroke="#1f2124" stroke-width=".6"/><rect x="9" y="2" width="2" height="3" fill="#1f2124"/><rect x="3" y="9" width="10" height="6" fill="#f2f3f5" stroke="#1f2124" stroke-width=".6"/></svg>
<svg style="left:84.91px;top:60.5px" width="18" height="18" viewBox="0 0 16 16"><rect x="4" y=".5" width="8" height="4" fill="#f2f3f5"/><rect x=".5" y="4.500" width="15" height="7" rx="1.500" fill="#a9adb3" stroke="#55585d" stroke-width=".8"/><rect x="10" y="6" width="4.500" height="2.500" fill="#5fbf7a"/><path d="M3.500 9.500h9l1.500 6h-12z" fill="#f2f3f5" stroke="#55585d" stroke-width=".6"/></svg>
<svg style="left:108.88px;top:60.5px" width="18" height="18" viewBox="0 0 16 16"><rect x="3" y=".5" width="8" height="4" fill="#f2f3f5"/><rect x=".5" y="4.500" width="14" height="7" rx="1.500" fill="#a9adb3" stroke="#55585d" stroke-width=".8"/><path d="M2.500 10h8l1.500 5.500h-11z" fill="#f2f3f5"/><circle cx="9.500" cy="8.500" r="3.300" fill="#9aa0a8" stroke="#f2f3f5" stroke-width="1.300"/><path d="M12 11l3.500 3.500" stroke="#f2f3f5" stroke-width="1.800"/></svg>
<svg style="left:132.85px;top:60.5px" width="18" height="18" viewBox="0 0 16 16"><path d="M3.500 0.500l6 10.500M12.500 0.500l-6 10.500" stroke="#f2f3f5" stroke-width="2.200"/><ellipse cx="3.700" cy="12.700" rx="2.300" ry="2.600" fill="none" stroke="#5a92d6" stroke-width="1.700" transform="rotate(30 3.700 12.700)"/><ellipse cx="12.300" cy="12.700" rx="2.300" ry="2.600" fill="none" stroke="#5a92d6" stroke-width="1.700" transform="rotate(-30 12.300 12.700)"/></svg>
<svg style="left:156.82px;top:60.5px" width="18" height="18" viewBox="0 0 16 16"><path d="M.5.500h6l2 2v8.500h-8z" fill="#5a92d6" stroke="#2f63a8" stroke-width=".8"/><path d="M6.500 5.500h6l3 3v7h-9z" fill="#f2f3f5" stroke="#1f2124" stroke-width=".8"/><path d="M8 9h4M8 11h5M8 13h5" stroke="#9a9da3" stroke-width=".8"/></svg>
<svg style="left:180.79px;top:60.5px" width="18" height="18" viewBox="0 0 16 16"><rect x=".5" y="2.500" width="11" height="12" rx="1" fill="#d2b48c" stroke="#7d6a4d" stroke-width=".8"/><rect x="3.500" y="1" width="5" height="2.500" rx="1" fill="#e6e6e6" stroke="#666" stroke-width=".5"/><path d="M6.500 5.500h6l3 3v7h-9z" fill="#f2f3f5" stroke="#1f2124" stroke-width=".8"/><path d="M8 9h4M8 11h5M8 13h5" stroke="#9a9da3" stroke-width=".8"/></svg>
<svg style="left:204.76px;top:60.5px" width="18" height="18" viewBox="0 0 16 16"><rect x=".5" y=".5" width="12" height="12" fill="#f2f3f5" stroke="#1f2124" stroke-width=".8"/><rect x="2" y="2" width="5.500" height="6" fill="#5a92d6"/><path d="M9 1.500v7M11 1.500v7M1.500 10.500h9" stroke="#555" stroke-width="1"/><path d="M15.500 6l-4 5" stroke="#5a92d6" stroke-width="1.600"/><ellipse cx="9" cy="13" rx="3" ry="1.800" fill="#f0a030"/></svg>
<svg style="left:228.73px;top:60.5px" width="18" height="18" viewBox="0 0 16 16"><path d="M.5 5.500l6-5v3c6 0 8.500 3 8.500 8.500l-1.500 2.500c0-5-2-7-7-7v3z" fill="#5a92d6" stroke="#2f63a8" stroke-width=".5"/><path d="M1.500 5.500l5-4v2.500c5 0 7.500 2 8 6" fill="none" stroke="#9cc4f0" stroke-width="1"/></svg>
<svg style="left:252.7px;top:60.5px" width="18" height="18" viewBox="0 0 16 16"><path d="M15.500 5.500l-6-5v3c-6 0-8.500 3-8.500 8.500l1.500 2.500c0-5 2-7 7-7v3z" fill="#5a92d6" stroke="#2f63a8" stroke-width=".5"/><path d="M14.500 5.500l-5-4v2.500c-5 0-7.500 2-8 6" fill="none" stroke="#9cc4f0" stroke-width="1"/></svg>
<svg style="left:276.67px;top:60.5px" width="18" height="18" viewBox="0 0 16 16"><g fill="#f2f3f5" stroke="#2b2d30" stroke-width=".5"><rect x="4.200" y="1.500" width="2.200" height="8" rx="1.100"/><rect x="6.800" y=".3" width="2.200" height="9" rx="1.100"/><rect x="9.400" y="1" width="2.200" height="8.500" rx="1.100"/><rect x="12" y="2.800" width="2.100" height="7.500" rx="1.050"/><path d="M4.200 7.500h9.900v3.500c0 3-1.800 5-5 5-2.600 0-3.800-1.300-5-3.300L1.300 8.800c-.6-1.200 .9-2 1.700-1l1.200 1.700z"/></g><path d="M4.500 8h9.300v2.500H4.500z" fill="#f2f3f5"/></svg>
<svg style="left:300.64px;top:60.5px" width="18" height="18" viewBox="0 0 16 16"><circle cx="6" cy="6" r="5.300" fill="#e8f0fb" stroke="#2f63a8" stroke-width="1.400"/><path d="M6 3v3.500h2.500" fill="none" stroke="#000" stroke-width="1.300"/><circle cx="10.500" cy="10.500" r="2.800" fill="#6a6e75" stroke="#f2f3f5" stroke-width="1.200"/><path d="M12.500 12.500l3 3" stroke="#9cc4f0" stroke-width="1.600"/></svg>
<svg style="left:324.61px;top:60.5px" width="18" height="18" viewBox="0 0 16 16"><rect x=".5" y=".5" width="13" height="14" fill="#dcdee1" stroke="#2b2d30" stroke-width=".8"/><rect x=".5" y=".5" width="13" height="3" fill="#2b2d30"/><rect x="11" y="1" width="2" height="2" fill="#999"/><circle cx="9.500" cy="9.500" r="3" fill="#c8cbd0" stroke="#f2f3f5" stroke-width="1.300"/><path d="M11.800 11.800l3.500 3.500" stroke="#9cc4f0" stroke-width="1.600"/></svg>
<svg style="left:348.58px;top:60.5px" width="18" height="18" viewBox="0 0 16 16"><path d="M0 5l6-5v2.500h9.500v5H6V10z" fill="#5a92d6" stroke="#2f63a8" stroke-width=".5"/><circle cx="9.500" cy="9.500" r="3" fill="#55585e" stroke="#f2f3f5" stroke-width="1.300"/><path d="M11.800 11.800l3.500 3.500" stroke="#9cc4f0" stroke-width="1.600"/></svg>
<svg style="left:372.55px;top:60.5px" width="18" height="18" viewBox="0 0 16 16"><rect x=".5" y=".5" width="15" height="15" fill="#f2f3f5" stroke="#2b2d30" stroke-width=".8"/><rect x="2" y="2" width="6.500" height="7" fill="#5a92d6" stroke="#2f63a8" stroke-width=".6"/><path d="M11 2v8M13.500 2v8" stroke="#2b2d30" stroke-width="1.200"/><path d="M2 12.500h12" stroke="#2b2d30" stroke-width="1"/><path d="M2 12.500l2.500-2v4z" fill="#2b2d30"/></svg>
<svg style="left:396.52px;top:60.5px" width="18" height="18" viewBox="0 0 16 16"><rect x=".5" y=".5" width="15" height="10.500" fill="#d6d8dc" stroke="#2b2d30" stroke-width=".8"/><rect x=".5" y=".5" width="15" height="3" fill="#2b2d30"/><rect x="12" y="1" width="2" height="2" fill="#888"/><rect x=".5" y="12.500" width="15" height="3" fill="#8b8e94" stroke="#3a3c40" stroke-width=".6"/><path d="M5.500 12.500v3M10.500 12.500v3" stroke="#3a3c40" stroke-width=".8"/></svg>
<svg style="left:420.49px;top:60.5px" width="18" height="18" viewBox="0 0 16 16"><path d="M0 9.500L9 1l5.500-.5v5.500l-8.500 9z" fill="#f2f3f5" stroke="#777" stroke-width=".4"/><circle cx="12.500" cy="2.800" r="1" fill="#333"/><path d="M4 8.500l3 3M6 6.500l3 3M8 4.500l2.500 2.500" stroke="#8a8d92" stroke-width="1"/><circle cx="11.500" cy="12" r="3.800" fill="#1f78d8"/><path d="M11.500 11v3.200" stroke="#fff" stroke-width="1.400"/><circle cx="11.500" cy="9.600" r=".8" fill="#fff"/></svg>
<svg style="left:444.46px;top:60.5px" width="18" height="18" viewBox="0 0 16 16"><path d="M3 4.500l4-3.500h8l-4 3.500zM2 8.500l4-3h3l-4 3zM1 12.500l4-3h3l-4 3zM2 15.500l4-2h6l-3 2z" fill="#f2f3f5"/><path d="M6 5l4.500 2v8L6 13z" fill="#2f63a8"/><path d="M10.500 7L15 4.500v8L10.500 15z" fill="#5a92d6"/><path d="M6 5l4.500-2.500L15 4.500 10.500 7z" fill="#9cc4f0"/></svg>
<svg style="left:468.43px;top:60.5px" width="18" height="18" viewBox="0 0 16 16"><path d="M1 3l4-2.500h4.500v13H1z" fill="#b5b8bd"/><path d="M9.500.500l2 1.500v11.500h-2z" fill="#8d9095"/><circle cx="12" cy="12" r="3.600" fill="#3d6fb3"/><path d="M12 11v3" stroke="#8fb4e6" stroke-width="1.300"/><circle cx="12" cy="9.700" r=".7" fill="#8fb4e6"/></svg>
<svg style="left:515.6px;top:60px" width="18" height="18" viewBox="0 0 16 16"><path d="M1.500 0v16M14.500 0v16" stroke="#aeb1b6" stroke-width="1"/><path d="M2.5 7.8H13.5" stroke="#6f9bd0" stroke-width="1.1"/><path d="M2.5 7.8l2.8 -2.0v4.0zM13.5 7.8l-2.8 -2.0v4.0z" fill="#6f9bd0"/></svg>
<svg style="left:539.57px;top:60px" width="18" height="18" viewBox="0 0 16 16"><path d="M9 .5l6 6M.5 9l6 6" stroke="#aeb1b6" stroke-width="1"/><path d="M4.500 11.500l7-7" stroke="#6f9bd0" stroke-width="1.400"/><path d="M3.500 12.500l1-3.500 2.500 2.500zM12.500 3.500l-3.500 1 2.500 2.500z" fill="#6f9bd0"/></svg>
<svg style="left:563.54px;top:60px" width="18" height="18" viewBox="0 0 16 16"><path d="M1.500 0v16M14.500 0v16" stroke="#aeb1b6" stroke-width="1"/><path d="M2.500 9c1.500-4.500 9.500-4.500 11 0" fill="none" stroke="#6f9bd0" stroke-width="2"/></svg>
<svg style="left:587.51px;top:60px" width="18" height="18" viewBox="0 0 16 16"><path d="M2 1v13.500h13" fill="none" stroke="#aeb1b6" stroke-width="1.200"/><path d="M2 0l-1.800 3h3.600zM16 14.500l-3-1.800v3.600z" fill="#aeb1b6"/><path d="M3 13.500l8-8.500" stroke="#6f9bd0" stroke-width="1.800"/><path d="M11.500 1l1.800 2.500L15 1M13.300 3.500v2.500" stroke="#fff" stroke-width="1.200" fill="none"/></svg>
<svg style="left:611.48px;top:60px" width="18" height="18" viewBox="0 0 16 16"><circle cx="8" cy="8" r="7.200" fill="none" stroke="#aeb1b6" stroke-width="1.200"/><path d="M8 3v10" stroke="#8a8d92" stroke-width=".8"/><path d="M2.500 8h6" stroke="#6f9bd0" stroke-width="1.400"/><path d="M1.500 8l3.500-2.500v5z" fill="#6f9bd0"/></svg>
<svg style="left:635.45px;top:60px" width="18" height="18" viewBox="0 0 16 16"><circle cx="8" cy="8" r="7.200" fill="none" stroke="#aeb1b6" stroke-width="1.200"/><path d="M1 8.500h3.500l3-2.500 3 3.500 2-1.500h3" fill="none" stroke="#6f9bd0" stroke-width="1.200"/></svg>
<svg style="left:659.42px;top:60px" width="18" height="18" viewBox="0 0 16 16"><circle cx="8" cy="8" r="7.200" fill="none" stroke="#aeb1b6" stroke-width="1.200"/><path d="M1.5 8H14.5" stroke="#6f9bd0" stroke-width="1.1"/><path d="M1.5 8l2.8 -2.0v4.0zM14.5 8l-2.8 -2.0v4.0z" fill="#6f9bd0"/></svg>
<svg style="left:683.39px;top:60px" width="18" height="18" viewBox="0 0 16 16"><path d="M.5 14.500h15M.5 14.500L12.500 1.500" stroke="#aeb1b6" stroke-width="1.100" fill="none"/><path d="M10.500 5.500c2 2 3 4.500 3 7.500" fill="none" stroke="#6f9bd0" stroke-width="1.300"/><path d="M9.500 4.500l3.500.5-2.500 2.500zM13.500 14l-2-3h4z" fill="#6f9bd0"/></svg>
<svg style="left:707.36px;top:60px" width="18" height="18" viewBox="0 0 16 16"><path d="M1.500 0v16M14.500 0v16" stroke="#aeb1b6" stroke-width="1"/><path d="M10.500 0L5.500 5.500h3L6 10l6.500-6.500h-3l3-3.500z" fill="#f6cf6a" stroke="#7a5c10" stroke-width=".4"/><path d="M2.5 11.5H13.5" stroke="#fff" stroke-width="1.3"/><path d="M2.5 11.5l2.52 -1.8v3.6zM13.5 11.5l-2.52 -1.8v3.6z" fill="#fff"/></svg>
<svg style="left:731.33px;top:60px" width="18" height="18" viewBox="0 0 16 16"><path d="M1.500 0v16M14.500 0v16M10 7v9" stroke="#aeb1b6" stroke-width="1"/><path d="M2.5 4.5H13.5" stroke="#fff" stroke-width="1.3"/><path d="M2.5 4.5l2.8 -2v4zM13.5 4.5l-2.8 -2v4z" fill="#fff"/><path d="M2.5 11.5H9.5" stroke="#6f9bd0" stroke-width="1.5"/><path d="M2.5 11.5l3.08 -2.2v4.4zM9.5 11.5l-3.08 -2.2v4.4z" fill="#6f9bd0"/></svg>
<svg style="left:755.3px;top:60px" width="18" height="18" viewBox="0 0 16 16"><path d="M1.500 0v16M8 0v16M14.500 0v16" stroke="#aeb1b6" stroke-width="1"/><path d="M1.500 6h13" stroke="#6f9bd0" stroke-width="1.200"/><path d="M4 4.500v3M5.500 4.500v3M10.500 4.500v3M12 4.500v3" stroke="#6f9bd0" stroke-width=".8"/></svg>
<svg style="left:779.27px;top:60px" width="18" height="18" viewBox="0 0 16 16"><path d="M1.500 0v16M11 0v16" stroke="#aeb1b6" stroke-width="1"/><path d="M2.5 5H10" stroke="#fff" stroke-width="1.3"/><path d="M2.5 5l2.52 -1.8v3.6zM10 5l-2.52 -1.8v3.6z" fill="#fff"/><path d="M2.5 10.5H10" stroke="#fff" stroke-width="1.3"/><path d="M2.5 10.5l2.52 -1.8v3.6zM10 10.5l-2.52 -1.8v3.6z" fill="#fff"/><path d="M14 2v12" stroke="#6f9bd0" stroke-width="1.500"/><path d="M14 0l-2.500 3.500h5zM14 16l-2.500-3.500h5z" fill="#6f9bd0"/></svg>
<svg style="left:803.24px;top:60px" width="18" height="18" viewBox="0 0 16 16"><path d="M1.500 0v16M14.500 0v16" stroke="#aeb1b6" stroke-width="1"/><rect x="2.500" y="0" width="11.500" height="5.500" fill="#2b7be0"/><text x="4" y="4.800" font-family="'Liberation Sans',sans-serif" font-size="5.500" font-weight="bold" fill="#fff">0.1</text><path d="M2.5 7.5H13.5" stroke="#fff" stroke-width="1.1"/><path d="M2.5 7.5l2.0999999999999996 -1.5v3.0zM13.5 7.5l-2.0999999999999996 -1.5v3.0z" fill="#fff"/><path d="M8 10v5M5.500 12.500h5" stroke="#b0b3b8" stroke-width="1"/><circle cx="8" cy="12.500" r="1.500" fill="none" stroke="#b0b3b8" stroke-width=".8"/></svg>
<svg style="left:827.21px;top:60px" width="18" height="18" viewBox="0 0 16 16"><circle cx="8" cy="8" r="7.200" fill="none" stroke="#aeb1b6" stroke-width="1.200"/><path d="M8 4v8M4 8h8" stroke="#6f9bd0" stroke-width="1.300"/><circle cx="8" cy="8" r="1.600" fill="#6f9bd0"/></svg>
<svg style="left:851.18px;top:60px" width="18" height="18" viewBox="0 0 16 16"><path d="M3 5.500l3 3.500L13.500 1" fill="none" stroke="#6f9bd0" stroke-width="2.400"/><path d="M0 10.500h16v5.500H0z" fill="#f4f5f6"/><path d="M2.500 10.500v3M5 10.500v2M7.500 10.500v3M10 10.500v2M12.500 10.500v3" stroke="#5b5e63" stroke-width="1"/></svg>
<svg style="left:875.15px;top:60px" width="18" height="18" viewBox="0 0 16 16"><circle cx="8" cy="8" r="7.200" fill="none" stroke="#aeb1b6" stroke-width="1.200"/><path d="M1 8.500h3.500l3-2.500 3 3.500 2-1.500h3" fill="none" stroke="#6f9bd0" stroke-width="1.200"/></svg>
<svg style="left:899.12px;top:60px" width="18" height="18" viewBox="0 0 16 16"><path d="M1.500 0v16M14.500 0v16" stroke="#aeb1b6" stroke-width="1"/><path d="M2.5 4.5H13.5" stroke="#6f9bd0" stroke-width="1.3"/><path d="M2.5 4.5l2.8 -2v4zM13.5 4.5l-2.8 -2v4z" fill="#6f9bd0"/><path d="M15.500 5l-5 6.500" stroke="#e8f1fb" stroke-width="1.800"/><path d="M4.500 14.500c.5-3 3-4 5.500-3.500 1.500.5 1.500 2 .5 3-1.500 1-4 1-6 .5z" fill="#f0a030"/></svg>
<svg style="left:947px;top:61px" width="18" height="18" viewBox="0 0 16 16"><rect x="0.5" y="0.5" width="8" height="6.5" fill="url(#gw)" stroke="#2a2c2f" stroke-width=".8"/><rect x="8" y="9.5" width="8" height="6.5" fill="url(#gw)" stroke="#2a2c2f" stroke-width=".8"/><rect x="3.5" y="5" width="10" height="6.5" fill="url(#gb)" stroke="#2c4c78" stroke-width=".8"/></svg>
<svg style="left:971px;top:61px" width="18" height="18" viewBox="0 0 16 16"><rect x="3.5" y="5" width="10" height="6.5" fill="url(#gb)" stroke="#2c4c78" stroke-width=".8"/><rect x="0.5" y="0.5" width="8" height="6.5" fill="url(#gw)" stroke="#2a2c2f" stroke-width=".8"/><rect x="8" y="9.5" width="8" height="6.5" fill="url(#gw)" stroke="#2a2c2f" stroke-width=".8"/></svg>
<svg style="left:995px;top:61px" width="18" height="18" viewBox="0 0 16 16"><rect x="6.5" y="6.5" width="9.5" height="9.5" fill="url(#gw)" stroke="#2a2c2f" stroke-width=".8"/><rect x="0.5" y="0.5" width="10" height="10" fill="url(#gb)" stroke="#2c4c78" stroke-width=".8"/></svg>
<svg style="left:1019px;top:61px" width="18" height="18" viewBox="0 0 16 16"><rect x="0.5" y="0.5" width="10" height="10" fill="url(#gb)" stroke="#2c4c78" stroke-width=".8"/><rect x="6.5" y="6.5" width="9.5" height="9.5" fill="url(#gw)" stroke="#2a2c2f" stroke-width=".8"/></svg>
<svg style="left:1043px;top:61px" width="18" height="18" viewBox="0 0 16 16"><rect x="1.500" y="1.500" width="11" height="11" fill="#3a6a98" stroke="#e8eef5" stroke-width="1"/><path d="M2 7l5-5M2 11l9-9M5 12l7-7" stroke="#9cc4e8" stroke-width=".8"/><path d="M1.500 0v14M12.500 0v14M0 1.500h14M0 12.500h14" stroke="#e8eef5" stroke-width=".8"/><rect x="6.5" y="6.5" width="9.5" height="9.5" fill="url(#gw)" stroke="#2a2c2f" stroke-width=".8"/></svg>
<svg style="left:1089.5px;top:61px" width="18" height="18" viewBox="0 0 16 16"><path d="M2.500 .5h8.500l3.500 3.500v11.500H2.500z" fill="#f4f5f6" stroke="#3a3c40" stroke-width=".5"/><path d="M11 .5v3.500h3.500" fill="none" stroke="#3a3c40" stroke-width=".5"/><path d="M0 5.500h6.500c1.500 0 1.500 2.500 0 2.500H4" fill="none" stroke="#3f7fc8" stroke-width="1.500"/><path d="M15.500 6.500l-6 7-2.500 1 .5-2.500 6-7z" fill="#f2c14a" stroke="#6b5416" stroke-width=".5"/></svg>
<svg style="left:1113.5px;top:61px" width="18" height="18" viewBox="0 0 16 16"><rect x=".5" y=".5" width="14" height="14" fill="#a4a7ac"/><rect x="5" y="5" width="6" height="6" fill="none" stroke="#4a4d52" stroke-width=".8"/><circle cx="4" cy="4" r="3.200" fill="#4f8fd6"/><rect x="9" y="9" width="7" height="7" fill="#b83038"/><path d="M10.500 12.500h4M12.500 10.500v4" stroke="#fff" stroke-width="1.300"/></svg>
<svg style="left:1137.5px;top:61px" width="18" height="18" viewBox="0 0 16 16"><rect x=".5" y=".5" width="14" height="14" fill="#a4a7ac"/><rect x="5" y="5" width="6" height="6" fill="none" stroke="#4a4d52" stroke-width=".8"/><circle cx="4" cy="4" r="3.200" fill="#4f8fd6"/><rect x="9" y="9" width="7" height="7" fill="#b83038"/><path d="M10.500 12.500h4" stroke="#fff" stroke-width="1.300"/></svg>
<svg style="left:1161.5px;top:61px" width="18" height="18" viewBox="0 0 16 16"><path d="M2.500 .5h8.500l3.500 3.500v11.500H2.500z" fill="#a4a7ac" stroke="#3a3c40" stroke-width=".5"/><path d="M11 .5v3.500h3.500" fill="none" stroke="#3a3c40" stroke-width=".5"/><path d="M0 5.500h6.500c1.500 0 1.500 2.500 0 2.500H4" fill="none" stroke="#3f7fc8" stroke-width="1.500"/><path d="M9.500 10l5.500 5.500M15 10l-5.500 5.500" stroke="#e0303a" stroke-width="1.300"/></svg>
<svg style="left:1185.5px;top:61px" width="18" height="18" viewBox="0 0 16 16"><path d="M2.500 .5h8.500l3.500 3.500v11.500H2.500z" fill="#a4a7ac" stroke="#3a3c40" stroke-width=".5"/><path d="M11 .5v3.500h3.500" fill="none" stroke="#3a3c40" stroke-width=".5"/><path d="M0 5.500h6.500c1.500 0 1.500 2.500 0 2.500H4" fill="none" stroke="#3f7fc8" stroke-width="1.500"/><rect x="9.500" y="9" width="6" height="6.500" fill="#5580b0" stroke="#2c4c78" stroke-width=".6"/><rect x="11" y="10.500" width="3" height="2" fill="#c8d4e4"/></svg>
<svg style="left:13px;top:88px" width="18" height="18" viewBox="0 0 16 16"><path d="M4.500 9.500h11l-4.500 4.500H.5z" fill="#d8dadd" stroke="#3a3c40" stroke-width=".6"/><path d="M4.500 6h11l-4.500 4.500H.5z" fill="#e4e6e9" stroke="#3a3c40" stroke-width=".6"/><path d="M4.500 1.500h11l-4.500 5.500H.5z" fill="#f4f5f6" stroke="#3a3c40" stroke-width=".6"/></svg>
<svg style="left:37px;top:88px" width="18" height="18" viewBox="0 0 16 16"><path d="M4.500 .5h11l-4.500 5H0z" fill="#f4c268"/><circle cx="10.500" cy="10" r="5" fill="#1f78d8"/><path d="M7.500 8.500h6M7.500 11.500h6" stroke="#fff" stroke-width="1.200"/><path d="M13.500 8.500l-2-1.800v3.600zM7.500 11.500l2-1.800v3.600z" fill="#fff"/></svg>
<svg style="left:61px;top:88px" width="18" height="18" viewBox="0 0 16 16"><path d="M4.500 .5h11l-4.500 6H0z" fill="#5a92d6"/><circle cx="10.500" cy="10" r="5" fill="#3d78c0"/><path d="M10.500 5.500v9M6.500 7.700l8 4.600M14.500 7.700l-8 4.600" stroke="#fff" stroke-width="1"/></svg>
<svg style="left:95px;top:89.5px" width="15" height="15" viewBox="0 0 16 16"><path d="M8 .5c3 0 5 2 5 4.800 0 2.200-1.800 3.200-2 5.700H5c-.2-2.500-2-3.500-2-5.700C3 2.500 5 .5 8 .5z" fill="#fbe9b8" stroke="#b89a50" stroke-width=".5"/><rect x="5.500" y="11.500" width="5" height="3.500" rx="1" fill="#b5b8bd"/></svg>
<svg style="left:112.5px;top:90px" width="14" height="14" viewBox="0 0 16 16"><circle cx="8" cy="8" r="3.300" fill="#f6d040"/><path d="M8 0v3.500M8 12.500V16M0 8h3.500M12.500 8H16M2.300 2.300l2.500 2.500M11.200 11.200l2.500 2.500M13.700 2.300l-2.500 2.500M4.800 11.200l-2.500 2.500" stroke="#f6d040" stroke-width="1.200"/></svg>
<svg style="left:129px;top:89.5px" width="15" height="15" viewBox="0 0 16 16"><path d="M12.500 3.500h2v11H3.500v-2" fill="none" stroke="#e8e9eb" stroke-width="1"/><path d="M7 .5v13M.5 7h13M2.500 2.500l9 9M11.500 2.500l-9 9" stroke="#fff" stroke-width="1.200"/><path d="M5 1.500l2 2 2-2M5 12.500l2-2 2 2M1.500 5l2 2-2 2M12.500 5l-2 2 2 2" fill="none" stroke="#fff" stroke-width="1"/></svg>
<svg style="left:145px;top:89px" width="16" height="16" viewBox="0 0 16 16"><path d="M8.500 8V4.500a3.200 3.200 0 0 1 6.400 0V7" fill="none" stroke="#e9eaec" stroke-width="1.700"/><rect x=".5" y="7.500" width="10.500" height="8" rx="1" fill="#5a92d6" stroke="#2f63a8" stroke-width=".6"/><rect x="1" y="8" width="9.500" height="2.500" fill="#9cc4f0" opacity=".7"/></svg>
<svg style="left:978.5px;top:89px" width="16" height="16" viewBox="0 0 16 16"><text x="-1" y="15" font-family="'Liberation Serif',serif" font-size="21" font-weight="bold" fill="#fff">T</text><path d="M16.500 5l-4.500 5.500" stroke="#8fc4f5" stroke-width="1.600"/><path d="M5.500 15.500c.5-3 3-4 5.500-3.500 1.500.5 1.500 2 .5 3-1.500 1-4 1-6 .5z" fill="#f0a030"/></svg>
<svg style="left:1110px;top:89px" width="16" height="16" viewBox="0 0 16 16"><path d="M15.500 0l-4 5" stroke="#8fc4f5" stroke-width="1.600"/><path d="M4.500 9.500c.5-3 3-4 5.500-3.500 1.500.5 1.500 2 .5 3-1.500 1-4 1-6 .5z" fill="#c8903a"/><path d="M.5 10v6M14.500 10v6M.5 13h14" stroke="#fff" stroke-width="1.200"/></svg>
<svg style="left:1256.5px;top:124px" width="18" height="18" viewBox="0 0 16 16"><path d="M1 8h14" stroke="#f2f3f5" stroke-width="1.200"/><circle cx="1.3" cy="8" r="1.3" fill="#2f7be0"/><circle cx="14.7" cy="8" r="1.3" fill="#2f7be0"/></svg>
<svg style="left:1256.5px;top:148px" width="18" height="18" viewBox="0 0 16 16"><path d="M1 8h12" stroke="#f2f3f5" stroke-width="1.200"/><path d="M16 8l-4-2.500v5z" fill="#f2f3f5"/><circle cx="1.3" cy="8" r="1.3" fill="#2f7be0"/></svg>
<svg style="left:1256.5px;top:172px" width="18" height="18" viewBox="0 0 16 16"><path d="M3 8h10" stroke="#f2f3f5" stroke-width="1.200"/><path d="M16 8l-4-2.500v5zM0 8l4-2.500v5z" fill="#f2f3f5"/><circle cx="6.5" cy="8" r="1.1" fill="#2f7be0"/><circle cx="9.5" cy="8" r="1.1" fill="#2f7be0"/></svg>
<svg style="left:1256.5px;top:196px" width="18" height="18" viewBox="0 0 16 16"><path d="M1.500 2.500l4 11 4-11 5 11" fill="none" stroke="#f2f3f5" stroke-width="1.200"/><circle cx="1.5" cy="2.5" r="1.3" fill="#2f7be0"/><circle cx="5.5" cy="13.5" r="1.3" fill="#2f7be0"/><circle cx="9.5" cy="2.5" r="1.3" fill="#2f7be0"/><circle cx="14.5" cy="13.5" r="1.3" fill="#2f7be0"/></svg>
<svg style="left:1256.5px;top:220px" width="18" height="18" viewBox="0 0 16 16"><path d="M8 1l6.500 3.800v6.400L8 15l-6.500-3.800V4.800z" fill="none" stroke="#f2f3f5" stroke-width="1.200"/><circle cx="8" cy="1" r="1.3" fill="#2f7be0"/><circle cx="14.5" cy="4.8" r="1.3" fill="#2f7be0"/><circle cx="14.5" cy="11.2" r="1.3" fill="#2f7be0"/><circle cx="8" cy="15" r="1.3" fill="#2f7be0"/><circle cx="1.5" cy="11.2" r="1.3" fill="#2f7be0"/><circle cx="1.5" cy="4.8" r="1.3" fill="#2f7be0"/></svg>
<svg style="left:1256.5px;top:244px" width="18" height="18" viewBox="0 0 16 16"><rect x="1.500" y="2.500" width="13" height="11" fill="none" stroke="#f2f3f5" stroke-width="1.300"/><circle cx="1.5" cy="13.5" r="1.3" fill="#2f7be0"/><circle cx="14.5" cy="2.5" r="1.3" fill="#2f7be0"/></svg>
<svg style="left:1256.5px;top:268px" width="18" height="18" viewBox="0 0 16 16"><path d="M1.500 13.500a6.500 8 0 0 1 13 0" fill="none" stroke="#f2f3f5" stroke-width="1.300"/><circle cx="1.5" cy="13" r="1.3" fill="#2f7be0"/><circle cx="8" cy="5.5" r="1.3" fill="#2f7be0"/><circle cx="14.5" cy="13" r="1.3" fill="#2f7be0"/></svg>
<svg style="left:1256.5px;top:292px" width="18" height="18" viewBox="0 0 16 16"><circle cx="8" cy="8" r="7" fill="none" stroke="#f2f3f5" stroke-width="1.200"/><path d="M1 8h7" stroke="#f2f3f5" stroke-width="1"/><circle cx="8" cy="8" r="1.200" fill="#e8c040"/></svg>
<svg style="left:1256.5px;top:316px" width="18" height="18" viewBox="0 0 16 16"><circle cx="5.500" cy="10.500" r="5" fill="#c4c7cc"/><rect x="5" y="1" width="10.500" height="9.500" fill="url(#gw)"/><path d="M3 12l4-4M4 13.500l5-5M2.500 9.500l3-3" stroke="#8a8d92" stroke-width=".7"/></svg>
<svg style="left:1256.5px;top:340px" width="18" height="18" viewBox="0 0 16 16"><ellipse cx="8" cy="8" rx="7.200" ry="5" fill="none" stroke="#f2f3f5" stroke-width="1.300"/><circle cx="0.8" cy="8" r="1.3" fill="#2f7be0"/><circle cx="15.2" cy="8" r="1.3" fill="#2f7be0"/><circle cx="8" cy="3" r="1.3" fill="#2f7be0"/></svg>
<svg style="left:1256.5px;top:364px" width="18" height="18" viewBox="0 0 16 16"><path d="M4 13c-5-2.500-3-9.500 4-9.500s9 7 4 9.500" fill="none" stroke="#f2f3f5" stroke-width="1.300"/><circle cx="4" cy="13" r="1.3" fill="#2f7be0"/><circle cx="12" cy="13" r="1.3" fill="#2f7be0"/></svg>
<svg style="left:1256.5px;top:388px" width="18" height="18" viewBox="0 0 16 16"><path d="M2.500 .5h7l4 4v10h-11z" fill="#f2f3f5" stroke="#3a3c40" stroke-width=".5"/><path d="M9.500 .5v4h4" fill="#b8bbc0"/><rect x="8" y="8" width="5" height="5" fill="#8a8d92"/><circle cx="13" cy="13" r="3" fill="#2f7be0"/></svg>
<svg style="left:1256.5px;top:412px" width="18" height="18" viewBox="0 0 16 16"><path d="M4.500 1.500h8v12h-8z" fill="#d0d3d8"/><path d="M4.500 1.500l3 2.500v12l-3-2.500z" fill="#a4a7ac"/><circle cx="3" cy="13" r="2.800" fill="#fff"/><circle cx="12" cy="3.800" r="3.800" fill="#1f78d8"/><path d="M12 1.500v3" stroke="#fff" stroke-width="1.300"/><circle cx="12" cy="6" r=".7" fill="#fff"/></svg>
<svg style="left:1256.5px;top:436px" width="18" height="18" viewBox="0 0 16 16"><circle cx="9" cy="3" r="1.2" fill="#2f7be0"/><circle cx="2.5" cy="11" r="1.2" fill="#2f7be0"/><circle cx="14" cy="14" r="1.2" fill="#2f7be0"/></svg>
<svg style="left:1256.5px;top:460px" width="18" height="18" viewBox="0 0 16 16"><rect x="1.500" y="1.500" width="13" height="13" fill="#6a6d72" stroke="#f2f3f5" stroke-width="1"/><path d="M2 6l4-4M2 10l8-8M2 14l12-12M6 14l8-8M10 14l4-4" stroke="#3a3c40" stroke-width=".8"/><path d="M1.500 0v16M14.500 0v16M0 1.500h16M0 14.500h16" stroke="#f2f3f5" stroke-width=".6"/></svg>
<svg style="left:1256.5px;top:484px" width="18" height="18" viewBox="0 0 16 16"><defs><linearGradient id="gg" x1="0" y1="0" x2="1" y2="0"><stop offset="0" stop-color="#7fb0e8"/><stop offset=".6" stop-color="#8fb8e8"/><stop offset="1" stop-color="#6a6d72"/></linearGradient></defs><rect x=".5" y="1.500" width="15" height="13" fill="url(#gg)" stroke="#c8d4e4" stroke-width=".6"/><path d="M10.500 0v16" stroke="#8fc4f5" stroke-width=".7"/></svg>
<svg style="left:1256.5px;top:508px" width="18" height="18" viewBox="0 0 16 16"><text x="0" y="14" font-family="'Liberation Serif',serif" font-size="19" font-weight="bold" fill="#fff">T</text><path d="M14.500 1v14M13 1h3M13 15h3" stroke="#e8e9eb" stroke-width="1"/></svg>
<svg style="left:1256.5px;top:555px" width="18" height="18" viewBox="0 0 16 16"><path d="M8 1.500v13M1.500 8h13" stroke="#f2f3f5" stroke-width="2"/><path d="M8 0l-3 3.500h6zM8 16l-3-3.500h6zM0 8l3.500-3v6zM16 8l-3.500-3v6z" fill="#f2f3f5"/><rect x="6.500" y="6.500" width="3" height="3" fill="#2f7be0"/></svg>
<svg style="left:1256.5px;top:579px" width="18" height="18" viewBox="0 0 16 16"><path d="M1 1h6l2 2v7H1z" fill="#d4d7dc"/><path d="M7 6.500h6l2.500 2.500v6.500H7z" fill="#5a92d6" stroke="#2f63a8" stroke-width=".6"/><path d="M9 1.500c3 0 4.500 1 4.500 3.500" fill="none" stroke="#2f7be0" stroke-width="1.400"/><path d="M13.500 6.500l-2-2.500h4z" fill="#2f7be0"/></svg>
<svg style="left:1256.5px;top:603px" width="18" height="18" viewBox="0 0 16 16"><path d="M0 8.500h16v5H0z" fill="#55585d"/><path d="M0 8.500h16M0 13.500h16" stroke="#f2f3f5" stroke-width="1"/><path d="M1 13l4-4M5 13l4-4M9 13l4-4M13 13l3-3" stroke="#c8cacd" stroke-width=".8"/><path d="M8 2v9" stroke="#6f9bd0" stroke-width="1.300"/><path d="M8 0l-2.500 3h5zM8 13l-2.500-3h5z" fill="#6f9bd0"/></svg>
<svg style="left:1256.5px;top:627px" width="18" height="18" viewBox="0 0 16 16"><rect x=".5" y=".5" width="15" height="15" fill="#5b9be8" stroke="#2f63a8" stroke-width=".8"/><rect x="1" y="10" width="5" height="5" fill="#e4e6e9"/><path d="M6 10l6-6" stroke="#fff" stroke-width="1.300"/><path d="M13.500 2.500l-4.500 1 3.500 3.500z" fill="#fff"/></svg>
<svg style="left:1256.5px;top:651px" width="18" height="18" viewBox="0 0 16 16"><path d="M8 2.500a6 6 0 1 0 5.500 3.500" fill="none" stroke="#f2f3f5" stroke-width="1.400"/><path d="M7 0l4.500 2.500-4.500 3z" fill="#f2f3f5"/></svg>
<svg style="left:1256.5px;top:675px" width="18" height="18" viewBox="0 0 16 16"><path d="M1 4c0-1.500 2-3 5-3v13.500H1z" fill="#dfe1e4"/><path d="M15 4c0-1.500-2-3-5-3v13.500h5z" fill="#5a92d6" stroke="#2f63a8" stroke-width=".6"/><path d="M8 0v16" stroke="#fff" stroke-width="1"/></svg>
<svg style="left:1256.5px;top:699px" width="18" height="18" viewBox="0 0 16 16"><rect x="1" y="1.5" width="6" height="3" fill="#5a92d6" stroke="#2f63a8" stroke-width=".5"/><rect x="1" y="6.5" width="6" height="3" fill="#5a92d6" stroke="#2f63a8" stroke-width=".5"/><rect x="1" y="11.5" width="6" height="3" fill="#5a92d6" stroke="#2f63a8" stroke-width=".5"/><rect x="9" y="1.5" width="6" height="3" fill="#5a92d6" stroke="#2f63a8" stroke-width=".5"/><rect x="9" y="6.5" width="6" height="3" fill="#5a92d6" stroke="#2f63a8" stroke-width=".5"/><rect x="9" y="11.5" width="6" height="3" fill="#5a92d6" stroke="#2f63a8" stroke-width=".5"/></svg>
<svg style="left:1256.5px;top:723px" width="18" height="18" viewBox="0 0 16 16"><rect x="3.500" y="1.500" width="11" height="12" fill="none" stroke="#f2f3f5" stroke-width="1.200"/><path d="M3.500 3v9" stroke="#6f9bd0" stroke-width="1"/><path d="M3.500 4l-2.500 2.500h5zM3.500 10l-2.500-2.500h5z" fill="#2f7be0"/></svg>
<svg style="left:1256.5px;top:747px" width="18" height="18" viewBox="0 0 16 16"><rect x="3.500" y="1.500" width="11" height="12" fill="none" stroke="#f2f3f5" stroke-width="1.200"/><path d="M3.500 3v9" stroke="#6f9bd0" stroke-width="1"/><path d="M3.500 5l-2.500 2.500h5zM3.500 11l-2.500-2.500h5z" fill="#2f7be0"/></svg>
<svg style="left:1256.5px;top:771px" width="18" height="18" viewBox="0 0 16 16"><path d="M7 0v16M0 8h8" stroke="#6f9bd0" stroke-width="1.200"/><path d="M9.500 8h6" stroke="#f2f3f5" stroke-width="1.200" stroke-dasharray="1 1"/></svg>
<svg style="left:1256.5px;top:795px" width="18" height="18" viewBox="0 0 16 16"><path d="M14.500 0v16M7 8h8" stroke="#6f9bd0" stroke-width="1.200"/><path d="M11 8l-3-2.500v5z" fill="#6f9bd0"/><path d="M0 8h5" stroke="#f2f3f5" stroke-width="1.200" stroke-dasharray="2 1.500"/></svg>
<svg style="left:1256.5px;top:819px" width="18" height="18" viewBox="0 0 16 16"><path d="M1.500 14V9c0-5 3-8 8-8h5v13z" fill="url(#gw)"/></svg>
<svg style="left:1256.5px;top:843px" width="18" height="18" viewBox="0 0 16 16"><path d="M14 0l2 2.500-9.500 9-3.500 1.500 1-3.500z" fill="#f2c14a" stroke="#8a6a18" stroke-width=".4"/><path d="M14 0l2 2.500-1.500 1.500-2-2.500z" fill="#b86a3a"/><path d="M2 14.500h9c2.500 0 2.500-3.500 0-3.500" fill="none" stroke="#c8cacd" stroke-width="1.200"/></svg>
<svg style="left:1256.5px;top:867px" width="18" height="18" viewBox="0 0 16 16"><rect x="1" y="1" width="13" height="14" fill="#55585d" stroke="#e8e9eb" stroke-width=".8"/><text x="1.500" y="13.500" font-family="'Liberation Serif',serif" font-size="16" font-weight="bold" fill="#fff">T</text><circle cx="1" cy="1" r="1.2" fill="#2f7be0"/><circle cx="14.5" cy="9.5" r="1.6" fill="#2f7be0"/></svg>
<svg style="left:1256.5px;top:891px" width="18" height="18" viewBox="0 0 16 16"><circle cx="8" cy="8" r="7.500" fill="url(#gw)"/><path d="M3 3l10 10M13 3L3 13" stroke="#3a3c40" stroke-width="2"/></svg><!--/ICONS-->
</body>
</html>
